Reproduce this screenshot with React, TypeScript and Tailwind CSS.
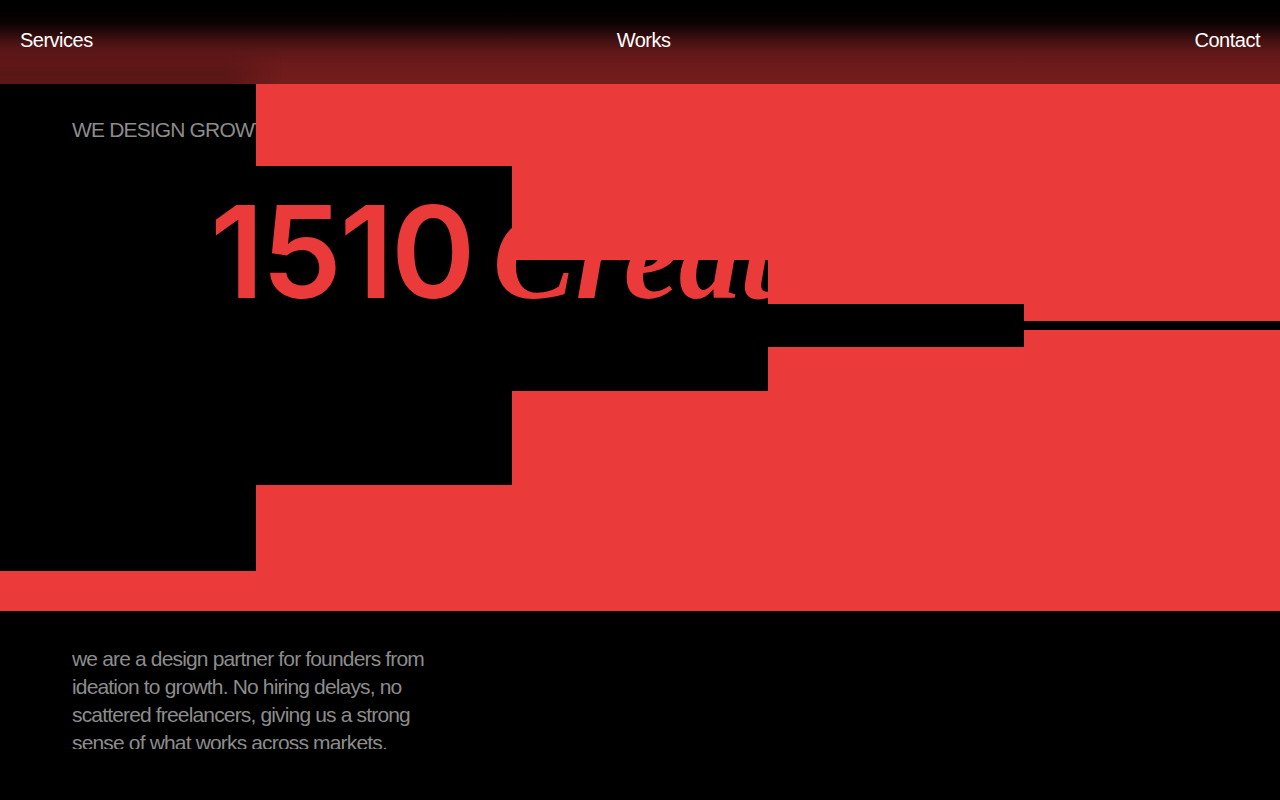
import React from 'react';

const links = [
    { label: 'Services', href: '#services' },
    { label: 'Works', href: '#works' },
    { label: 'Contact', href: '#contact' },
];

// Height of the top and bottom shutter in each column
const shutters = ['h-[7%]', 'h-[22%]', 'h-[38.5%]', 'h-[46.25%]', 'h-[49.25%]'];

const Navbar = () => (
    <nav className="fixed inset-x-0 top-0 z-20 flex h-21 items-center justify-between bg-[linear-gradient(#000_12%,#0c0202_27%,#280a0a_39%,#451112_49%,#5d1718_61%,#6d1a1b_76%,#741d1c)] px-5 pb-1">
        {/* Shade over the first column */}
        <div className="absolute bottom-0 left-0 h-9 w-[22%] bg-black/20 mask-t-from-30% mask-r-from-80%" aria-hidden="true" />
        {links.map((link) => (
            <a key={link.label} href={link.href} className="relative text-xl font-medium tracking-tight text-white">
                {link.label}
            </a>
        ))}
    </nav>
);

const Shutters = () => (
    <div className="absolute inset-0 grid grid-cols-5" aria-hidden="true">
        {shutters.map((height) => (
            <div key={height} className="flex h-full flex-col justify-between">
                <div className={`bg-[#ea3a3a] ${height}`} />
                <div className={`bg-[#ea3a3a] ${height}`} />
            </div>
        ))}
    </div>
);

const Hero = () => (
    <section className="relative min-h-[571px] overflow-hidden pt-19">
        <p className="px-18 text-[21px] leading-7 tracking-[-0.04em] text-[#8c8c8c]">WE DESIGN GROWTH</p>
        <h1 className="mt-9 flex items-baseline gap-5 whitespace-nowrap pl-[16.4%] text-[#ea3a3a]">
            <span className="font-[Inter,sans-serif] text-[128px] leading-36 font-semibold tracking-[-0.02em]">1510</span>
            <span className="font-['Liberation_Serif',serif] text-[124px] leading-36 font-bold italic">Creative</span>
        </h1>
        <Shutters />
    </section>
);

export default function App() {
    return (
        <div className="min-h-screen bg-black pt-10 font-['Liberation_Sans',Arial,sans-serif]">
            <Navbar />
            <main>
                <Hero />
                <section className="px-18 pt-[34px] pb-12">
                    <div className="h-26 max-w-[360px] overflow-hidden">
                        <p className="text-[21px] leading-7 tracking-[-0.04em] text-[#8c8c8c]">
                            we are a design partner for founders from ideation to growth. No hiring delays, no
                            scattered freelancers, giving us a strong sense of what works across markets.
                        </p>
                    </div>
                </section>
            </main>
        </div>
    );
}
